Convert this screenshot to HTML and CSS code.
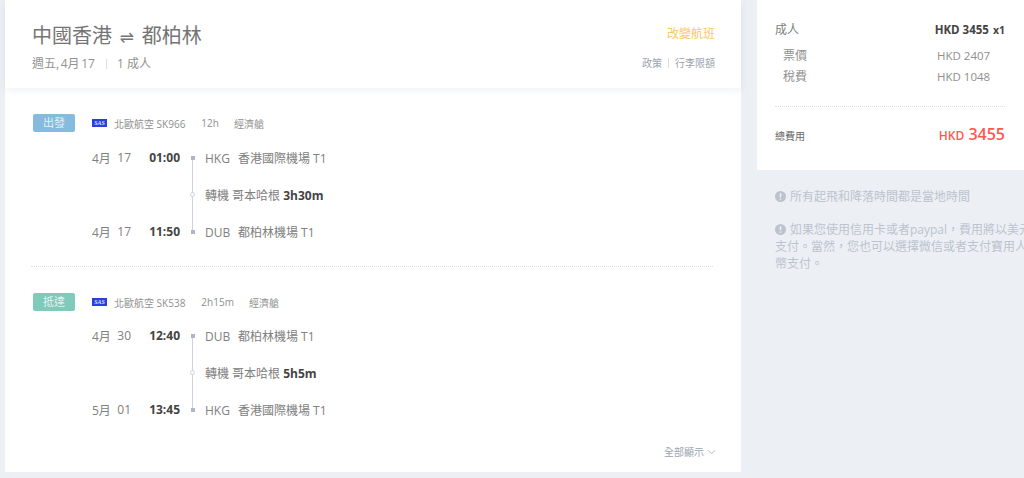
FILE: index.html
```html
<!DOCTYPE html>
<html lang="zh-Hant">
    <head>
        <meta charset="UTF-8">
        <meta name="viewport" content="width=device-width, initial-scale=1.0">
        <title>訂單詳情</title>
        <link rel="stylesheet" href="styles.css">
    </head>
    <body>
        <div class="page">
            <div class="main">
                <div class="head">
                    <div class="head-left">
                        <h1>中國香港 <span class="arrows">⇌</span> 都柏林</h1>
                        <div class="sub"><span class="day">週五, 4月 17</span><i class="bar"></i><span>1 成人</span></div>
                    </div>
                    <div class="head-right">
                        <a class="change">改變航班</a>
                        <div class="links"><span>政策</span><i class="bar small"></i><span>行李限額</span></div>
                    </div>
                </div>

                <div class="trip">
                    <div class="trip-top">
                        <span class="tag blue">出發</span>
                        <svg class="logo" viewBox="0 0 15 8"><rect width="15" height="8" fill="#2a3fe0"/><text x="7.5" y="6" class="logo-text">SAS</text></svg>
                        <span class="air">北歐航空 SK966</span>
                        <span class="dur">12h</span>
                        <span class="cabin">經濟艙</span>
                    </div>
                    <div class="row">
                        <span class="date"><span>4月</span><span>17</span></span>
                        <b class="time">01:00</b>
                        <span class="node"><i class="dot"></i></span>
                        <span class="place"><span class="code">HKG</span>香港國際機場 T1</span>
                    </div>
                    <div class="row stop">
                        <span class="date"></span>
                        <b class="time"></b>
                        <span class="node"><i class="ring"></i></span>
                        <span class="place">轉機 哥本哈根 <b>3h30m</b></span>
                    </div>
                    <div class="row last">
                        <span class="date"><span>4月</span><span>17</span></span>
                        <b class="time">11:50</b>
                        <span class="node"><i class="dot"></i></span>
                        <span class="place"><span class="code">DUB</span>都柏林機場 T1</span>
                    </div>
                </div>

                <div class="line"></div>

                <div class="trip second">
                    <div class="trip-top">
                        <span class="tag green">抵達</span>
                        <svg class="logo" viewBox="0 0 15 8"><rect width="15" height="8" fill="#2a3fe0"/><text x="7.5" y="6" class="logo-text">SAS</text></svg>
                        <span class="air">北歐航空 SK538</span>
                        <span class="dur">2h15m</span>
                        <span class="cabin">經濟艙</span>
                    </div>
                    <div class="row">
                        <span class="date"><span>4月</span><span>30</span></span>
                        <b class="time">12:40</b>
                        <span class="node"><i class="dot"></i></span>
                        <span class="place"><span class="code">DUB</span>都柏林機場 T1</span>
                    </div>
                    <div class="row stop">
                        <span class="date"></span>
                        <b class="time"></b>
                        <span class="node"><i class="ring"></i></span>
                        <span class="place">轉機 哥本哈根 <b>5h5m</b></span>
                    </div>
                    <div class="row last">
                        <span class="date"><span>5月</span><span>01</span></span>
                        <b class="time">13:45</b>
                        <span class="node"><i class="dot"></i></span>
                        <span class="place"><span class="code">HKG</span>香港國際機場 T1</span>
                    </div>
                </div>

                <div class="more">全部顯示
                    <svg viewBox="0 0 10 6"><path d="M1 1l4 4 4-4" fill="none" stroke="#aab2bd" stroke-width="1"/></svg>
                </div>
            </div>

            <div class="side">
                <div class="price">
                    <div class="price-row adult"><span>成人</span><b>HKD 3455<span class="times">x1</span></b></div>
                    <div class="price-row sub-row"><span>票價</span><span class="amount">HKD 2407</span></div>
                    <div class="price-row sub-row"><span>稅費</span><span class="amount">HKD 1048</span></div>
                    <div class="price-row total">
                        <span class="total-label">總費用</span>
                        <span class="total-num"><small>HKD</small> 3455</span>
                    </div>
                </div>
                <div class="notes">
                    <p><svg class="warn" viewBox="0 0 11 11"><circle cx="5.5" cy="5.5" r="5.5" fill="#bcc3cd"/><path d="M5.5 2.2v4M5.5 7.6v1.2" stroke="#ecf0f5" stroke-width="1.6"/></svg>所有起飛和降落時間都是當地時間</p>
                    <p><svg class="warn" viewBox="0 0 11 11"><circle cx="5.5" cy="5.5" r="5.5" fill="#bcc3cd"/><path d="M5.5 2.2v4M5.5 7.6v1.2" stroke="#ecf0f5" stroke-width="1.6"/></svg>如果您使用信用卡或者paypal，費用將以美元支付。當然，您也可以選擇微信或者支付寶用人民幣支付。</p>
                </div>
            </div>
        </div>
    </body>
</html>
```

FILE: styles.css
```css
*{
    margin: 0;
    padding: 0;
    box-sizing: border-box;
}
html,body{
    height: 100%;
    overflow: hidden;
}
body{
    background-color: #ecf0f5;
    font-family: "Open Sans", "Noto Sans CJK TC", sans-serif;
    font-size: 12px;
    color: #666666;
}
i{
    font-style: normal;
}
.page{
    display: flex;
    align-items: flex-start;
    padding-left: 5px;
    width: 1024px;
}

/* left card */
.main{
    flex: none;
    width: 736px;
    height: 472px;
    background-color: #ffffff;
}
.head{
    display: flex;
    justify-content: space-between;
    height: 88px;
    padding: 22px 26px 0 27px;
    box-shadow: 0 2px 8px rgba(40, 60, 90, 0.08);
}
h1{
    font-size: 20px;
    font-weight: 400;
    line-height: 28px;
    color: #757575;
}
.arrows{
    margin: 0 2.5px;
    font-family: "DejaVu Sans", sans-serif;
    font-size: 17px;
}
.sub{
    display: flex;
    align-items: center;
    margin-top: 5px;
    font-size: 12px;
    line-height: 16px;
    color: #929292;
}
.day{
    word-spacing: -1.5px;
}
.bar{
    display: inline-block;
    width: 1px;
    height: 10px;
    margin: 0 10px 0 11px;
    background-color: #dddddd;
}
.bar.small{
    margin: 0 6px;
}
.head-right{
    text-align: right;
}
.change{
    display: block;
    margin-top: 2px;
    font-size: 12px;
    line-height: 20px;
    color: #fbc868;
}
.links{
    display: flex;
    justify-content: flex-end;
    align-items: center;
    margin-top: 11px;
    font-size: 10px;
    line-height: 16px;
    color: #9aa3ae;
}

/* flight blocks */
.trip{
    padding: 26px 0 0 28px;
}
.trip-top{
    display: flex;
    align-items: center;
    height: 18px;
    font-size: 10px;
    color: #8f8f8f;
}
.tag{
    width: 42px;
    height: 18px;
    margin-right: 17px;
    border-radius: 2px;
    color: rgba(255, 255, 255, 0.8);
    font-size: 11px;
    line-height: 18px;
    text-align: center;
}
.tag.blue{
    background-color: #85bbdc;
}
.tag.green{
    background-color: #7fcabb;
}
.logo{
    width: 15px;
    height: 8px;
    margin: -1px 7px 0 0;
}
.logo-text{
    font-family: "Liberation Serif", serif;
    font-size: 6px;
    font-style: italic;
    font-weight: 700;
    fill: #dfe4ff;
    text-anchor: middle;
}
.air{
    margin-right: 16px;
}
.dur{
    margin-right: 15px;
}
.row{
    display: flex;
    align-items: center;
    height: 37px;
    margin-left: 59px;
    font-size: 12px;
    color: #808080;
}
.trip-top + .row{
    margin-top: 7px;
}
.second .trip-top + .row{
    margin-top: 6px;
}
.date{
    display: flex;
    justify-content: space-between;
    width: 39px;
}
.time{
    width: 49px;
    text-align: right;
    color: #444444;
    font-weight: 700;
}
.node{
    position: relative;
    align-self: stretch;
    display: flex;
    align-items: center;
    justify-content: center;
    width: 5px;
    margin: 0 10px;
}
.node::before{
    content: "";
    position: absolute;
    left: 2px;
    top: 0;
    bottom: 0;
    width: 1px;
    background-color: #ccd3df;
}
.trip-top + .row .node::before{
    top: 50%;
}
.row.last .node::before{
    bottom: 50%;
}
.dot{
    position: relative;
    width: 4px;
    height: 4px;
    background-color: #aeb6c6;
}
.ring{
    position: relative;
    width: 5px;
    height: 5px;
    border: 1px solid #ccd3df;
    border-radius: 50%;
    background-color: #ffffff;
}
.place b{
    color: #444444;
}
.code{
    display: inline-block;
    width: 33px;
}
.line{
    margin: 16px 28px 0 26px;
    border-top: 1px dotted #dddfe3;
}
.more{
    display: flex;
    justify-content: flex-end;
    align-items: center;
    margin-top: 16px;
    padding-right: 25px;
    font-size: 10px;
    line-height: 16px;
    color: #9aa3ae;
}
.more svg{
    width: 9px;
    height: 6px;
    margin-left: 3px;
}

/* right column */
.side{
    flex: none;
    width: 267px;
    margin-left: 16px;
}
.price{
    height: 170px;
    padding: 21px 19px 0 18px;
    background-color: #ffffff;
}
.price-row{
    display: flex;
    justify-content: space-between;
}
.adult{
    font-size: 12px;
    line-height: 18px;
    color: #808080;
}
.adult b{
    color: #444444;
    font-size: 11.5px;
}
.times{
    margin-left: 4px;
    font-size: 10.5px;
}
.sub-row{
    height: 21px;
    padding-left: 8px;
    font-size: 12px;
    line-height: 21px;
    color: #8f8f8f;
}
.adult + .sub-row{
    margin-top: 6px;
}
.amount{
    width: 68px;
    font-size: 11.5px;
}
.total{
    align-items: center;
    margin-top: 19px;
    padding-top: 15px;
    border-top: 1px dotted #dcdfe4;
}
.total-label{
    font-size: 10px;
    color: #666666;
}
.total-num{
    font-size: 16px;
    font-weight: 600;
    line-height: 24px;
    color: #fb5a52;
}
.total-num small{
    font-size: 12px;
    font-weight: 600;
}
.notes{
    width: 284px;
    padding: 18px 0 0 18px;
    font-size: 12px;
    line-height: 17px;
    color: #bcc3cd;
}
.notes p{
    margin-bottom: 16px;
}
.warn{
    width: 11px;
    height: 11px;
    margin-right: 4px;
    vertical-align: -1px;
}
```
